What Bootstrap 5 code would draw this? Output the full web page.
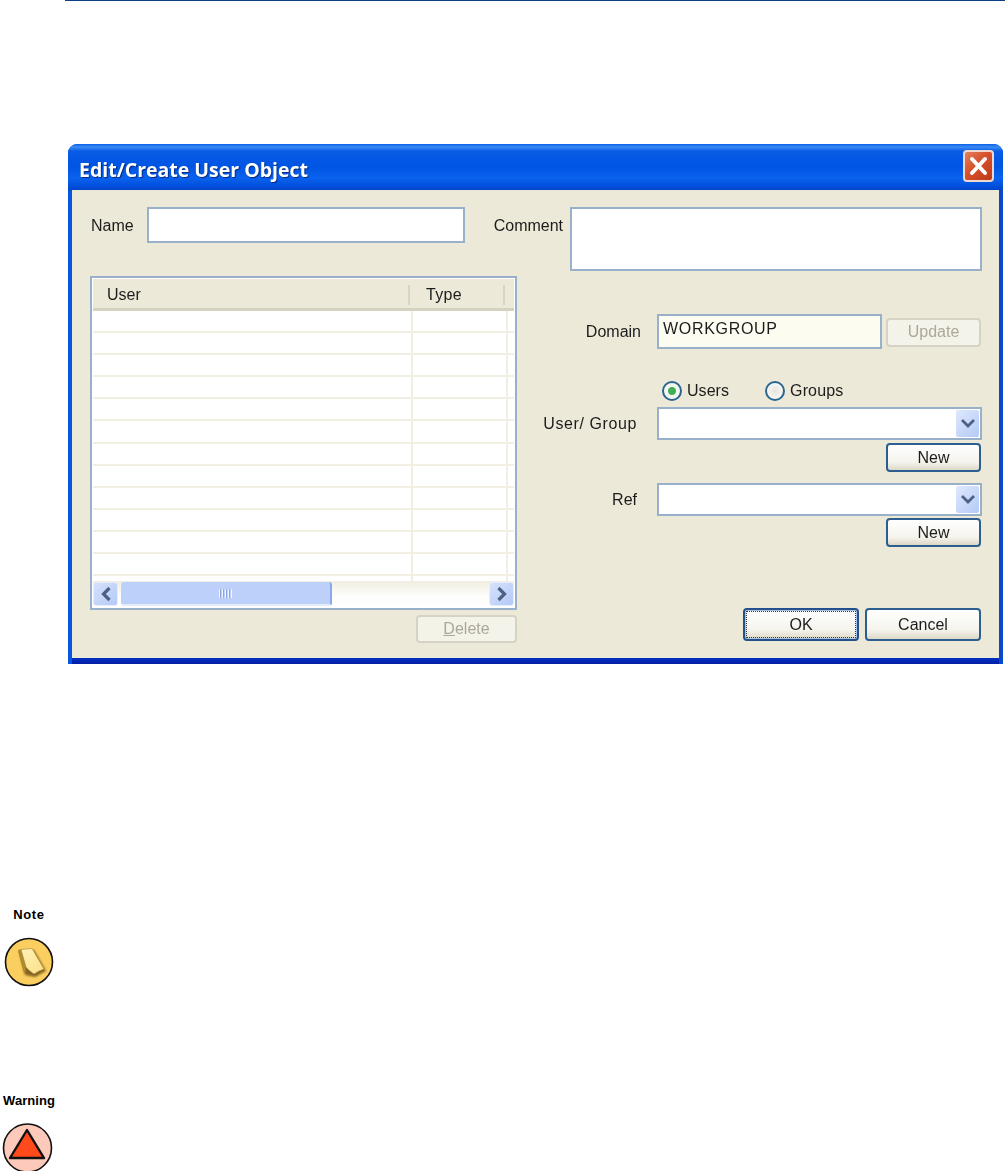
<!DOCTYPE html>
<html lang="en">
<head>
<meta charset="utf-8">
<title>Edit/Create User Object</title>
<link href="https://cdn.jsdelivr.net/npm/bootstrap@5.3.0/dist/css/bootstrap.min.css" rel="stylesheet">
<style>
html,body{background:#fff;margin:0;height:1171px;overflow:hidden}
body{font-family:"Liberation Sans",Arial,sans-serif;font-size:16px;color:#1c1c1c;line-height:1.2}
.toprule{height:1px;margin-left:65px;background:#0b3f80}
.dlg{margin:143px 0 0 68px;width:935px;height:520px;border-radius:9px 9px 0 0;overflow:hidden;background:#0a55e0;filter:blur(.45px)}
.dlg-title{height:46px;padding:0 9px 0 11px;background:linear-gradient(#0a5fe8 0,#3b8cf2 3px,#0a5ce6 7px,#0054e3 22px,#0a62ee 34px,#0050dc 42px,#0043c8 46px)}
.dlg-title h1{font-family:"Open Sans",sans-serif;font-weight:700;font-size:19.5px;margin:5px 0 0;color:#fff;letter-spacing:0;text-shadow:1px 1px 1px #0a2a80}
.xbtn{width:31px;height:32px;border:2px solid #eed9d0;border-radius:4px;background:linear-gradient(135deg,#e4805e,#d6502a 45%,#bd3a18);margin-top:-2px;padding:0}
.xbtn svg{display:block;margin:auto}
.dlg-outer{height:474px;padding:0 4px 6px;background:linear-gradient(90deg,#0a55e0 0,#0a55e0 4px,transparent 4px),linear-gradient(270deg,#0a48d0 0,#0a48d0 4px,transparent 4px),linear-gradient(0deg,#001ea8 0,#0033c0 6px,#0a55e0 6px)}
.dlg-body{height:468px;background:#ece9d8;padding:17px 17px 0 18px}
.toprow{height:64px;margin-bottom:5px}
.fld{border:2px solid #98b0ca;border-radius:0;background:#fff;box-shadow:none;padding:0 4px;font-size:16px;color:#1c1c1c;min-height:0;flex:none}
.fld:focus{border-color:#98b0ca;box-shadow:none}
.fld-name{width:318px;height:36px;margin-left:13px;margin-right:29px}
.fld-comment{width:412px;height:64px;margin-left:6px;resize:none}
.lbl-name{padding:9px 0 0 1px}
.lbl-comment{padding-top:9px;width:70px;white-space:nowrap}
.leftcol{width:427px;flex:none}
.listbox{height:334px;border:2px solid #98b0ca;background:#fff;padding:1px}
.grid-head{height:32px;background:#ece9d8;border-bottom:3px solid #d6d2c2;display:flex;padding-top:6px}
.gh-user{width:317px;padding-left:14px;border-right:2px solid #d8d4c6;height:20px}
.gh-type{width:95px;padding-left:16px;border-right:2px solid #d8d4c6;height:20px;letter-spacing:.3px}
.grid-rows{height:270px;overflow:hidden;display:grid;grid-template-columns:320px 95px 6px;grid-auto-rows:22.1px}
.grid-rows span{border-bottom:2px solid #f1efe2;border-right:2px solid #f1efe2}
.grid-rows span:nth-child(3n){border-right:0}
.hscroll{height:26px;background:linear-gradient(#f0eee2,#fdfdfb 60%,#fff);display:flex;padding:1px 0 1px}
.sb-arrow{width:25px;height:24px;background:linear-gradient(135deg,#d6e2fc,#b4c9f7);border:1px solid #e6edfc;border-radius:3px;display:flex;align-items:center;justify-content:center}
.sb-thumb{width:211px;margin-left:3px;border-radius:3px;background:#bcd0fa;border-right:2px solid #8aa8ea;border-bottom:2px solid #e4ebfb;display:flex;align-items:center;justify-content:center}
.sb-grip{width:13px;height:9px;background:repeating-linear-gradient(90deg,#f2f6ff 0,#f2f6ff 1px,#8aa5df 1px,#8aa5df 2px,transparent 2px,transparent 3px)}
.sb-space{flex:1}
.xpbtn{border:2px solid #2c5f90;border-radius:4px;background:linear-gradient(#fff,#f4f3ec 70%,#dcd8c8);color:#1c1c1c;font-size:16px;padding:0;line-height:1;box-shadow:none}
.xpbtn:hover{background:linear-gradient(#fff,#f4f3ec 70%,#dcd8c8);color:#1c1c1c;border-color:#2c5f90}
.xpbtn:disabled,.xpbtn.disabled{opacity:1;background:#f4f3ea;border-color:#d6d3c4;color:#aca899}
.btn-del{width:101px;height:28px;margin-top:5px}
.rightcol{width:465px;flex:none;padding-top:38px}
.rlbl{width:124px;text-align:right;flex:none}
.rlbl-in{width:120px;text-align:right;flex:none;white-space:nowrap}
.lbl-ug{letter-spacing:.6px}
.r-domain{height:35px}
.fld-domain{width:225px;height:35px;background:#fcfdf0;margin-left:16px;letter-spacing:.7px;padding:0 4px 5px;font-size:16px}
.btn-upd{width:95px;height:29px;margin:1px 0 0 4px}
.r-radios{height:26px;margin-top:29px;margin-bottom:3px;padding-left:145px}
.rd{width:20px;height:20px;margin:0;background-image:radial-gradient(circle,#e6e4dc,#fff);border:2px solid #2a6690;flex:none;box-shadow:none}
.rd:checked{background-color:#fff;border-color:#2a6690;background-image:radial-gradient(circle,#3fae55 0,#3fae55 3.5px,#f6f6f0 4.5px)}
.rd:focus{box-shadow:none;border-color:#2a6690}
.rd-l1{margin:0 36px 0 5px;letter-spacing:.05px}
.rd-l2{margin-left:5px;letter-spacing:.15px}
.r-combo{height:33px}
.combo{width:325px;height:33px;margin-left:20px;border:2px solid #98b0ca;background:#fff;display:flex;justify-content:flex-end;padding:1px 1px 1px 0}
.combo-btn{width:23px;height:27px;background:linear-gradient(135deg,#dfe9fe,#b4c9f6);border-radius:2px;display:flex;align-items:center;justify-content:center}
.btn-new{width:95px;height:29px;display:block;margin:3px 1px 0 auto}
.r-ref{margin-top:11px}
.btn-new2{margin-top:2px}
.r-btns{margin:61px 1px 0 0;gap:6px}
.btn-ok{width:116px;height:33px;padding-top:1px;outline:1px dotted #333;outline-offset:-4px;border-color:#234f8a;box-shadow:inset 0 0 0 1px #a9c4ea}
.btn-ok:hover{border-color:#234f8a}
.btn-cancel{width:116px;height:33px;padding-top:1px}
.sidenote{width:58px;margin:0;text-align:center;font-size:13px;font-weight:700;color:#000;line-height:15px}
.note1{margin-top:243px;letter-spacing:.6px}
.note2{margin-top:106px;letter-spacing:.05px}
.sidenote svg{display:block;margin-top:15px}
</style>
</head>
<body>
<div class="toprule"></div>
<div class="dlg">
  <div class="dlg-title d-flex align-items-center justify-content-between">
    <h1>Edit/Create User Object</h1>
    <button class="xbtn" type="button" aria-label="Close"><svg width="27" height="28" viewBox="0 0 27 28"><path d="M7 7l13 14M20 7L7 21" stroke="#fff" stroke-width="4" stroke-linecap="round"/></svg></button>
  </div>
  <div class="dlg-outer">
    <div class="dlg-body">
      <div class="toprow d-flex">
        <label class="lbl-name">Name</label>
        <input class="form-control fld fld-name" type="text">
        <label class="lbl-comment">Comment</label>
        <textarea class="form-control fld fld-comment"></textarea>
      </div>
      <div class="d-flex">
        <div class="leftcol">
          <div class="listbox">
            <div class="grid-head"><div class="gh-user">User</div><div class="gh-type">Type</div></div>
            <div class="grid-rows">
              <span></span><span></span><span></span><span></span><span></span><span></span>
              <span></span><span></span><span></span><span></span><span></span><span></span>
              <span></span><span></span><span></span><span></span><span></span><span></span>
              <span></span><span></span><span></span><span></span><span></span><span></span>
              <span></span><span></span><span></span><span></span><span></span><span></span>
              <span></span><span></span><span></span><span></span><span></span><span></span>
              <span></span><span></span><span></span>
            </div>
            <div class="hscroll">
              <div class="sb-arrow"><svg width="12" height="16" viewBox="0 0 12 16"><path d="M9.5 2L3.5 8l6 6" fill="none" stroke="#4d6185" stroke-width="3.2"/></svg></div>
              <div class="sb-thumb"><div class="sb-grip"></div></div>
              <div class="sb-space"></div>
              <div class="sb-arrow"><svg width="12" height="16" viewBox="0 0 12 16"><path d="M2.5 2l6 6-6 6" fill="none" stroke="#4d6185" stroke-width="3.2"/></svg></div>
            </div>
          </div>
          <div class="d-flex justify-content-end"><button class="btn xpbtn btn-del" type="button" disabled><u>D</u>elete</button></div>
        </div>
        <div class="rightcol">
          <div class="r-domain d-flex align-items-center">
            <label class="rlbl">Domain</label>
            <input class="form-control fld fld-domain" type="text" value="WORKGROUP">
            <button class="btn xpbtn btn-upd" type="button" disabled>Update</button>
          </div>
          <div class="r-radios d-flex align-items-center">
            <input class="form-check-input rd" type="radio" name="ug" id="ru" checked><label class="rd-l1" for="ru">Users</label>
            <input class="form-check-input rd" type="radio" name="ug" id="rg"><label class="rd-l2" for="rg">Groups</label>
          </div>
          <div class="r-combo d-flex align-items-center">
            <label class="rlbl-in lbl-ug">User/ Group</label>
            <div class="combo"><div class="combo-btn"><svg width="16" height="11" viewBox="0 0 16 11"><path d="M2 2l6 6 6-6" fill="none" stroke="#4d6185" stroke-width="2.8"/></svg></div></div>
          </div>
          <button class="btn xpbtn btn-new" type="button">New</button>
          <div class="r-combo r-ref d-flex align-items-center">
            <label class="rlbl-in">Ref</label>
            <div class="combo"><div class="combo-btn"><svg width="16" height="11" viewBox="0 0 16 11"><path d="M2 2l6 6 6-6" fill="none" stroke="#4d6185" stroke-width="2.8"/></svg></div></div>
          </div>
          <button class="btn xpbtn btn-new btn-new2" type="button">New</button>
          <div class="r-btns d-flex justify-content-end">
            <button class="btn xpbtn btn-ok" type="button">OK</button>
            <button class="btn xpbtn btn-cancel" type="button">Cancel</button>
          </div>
        </div>
      </div>
    </div>
  </div>
</div>
<div class="sidenote note1">Note
  <svg width="58" height="50" viewBox="0 0 58 50">
    <defs>
      <linearGradient id="pad" x1="0" y1="0" x2="1" y2="1"><stop offset="0" stop-color="#fff2b8"/><stop offset="1" stop-color="#fddf86"/></linearGradient>
      <filter id="sh" x="-30%" y="-30%" width="160%" height="160%"><feGaussianBlur stdDeviation="1.3"/></filter>
    </defs>
    <circle cx="29" cy="25" r="23.5" fill="#fbcf5f" stroke="#111" stroke-width="1.6"/>
    <path d="M19 14L25 38 35 40 46 34 34 13z" fill="#5c3f0c" opacity=".75" filter="url(#sh)"/>
    <path d="M18 13.5l3-1.5 5 19-1 5-1.5-1z" fill="#b08a2c"/>
    <path d="M21 12.5L32 11.5 44 32Q38 34 34 37 28 33 26 30z" fill="url(#pad)" stroke="#a98a36" stroke-width=".6"/>
  </svg>
</div>
<div class="sidenote note2">Warning
  <svg width="58" height="50" viewBox="0 0 58 50">
    <circle cx="27.5" cy="25" r="24" fill="#fcc9ba" stroke="#111" stroke-width="1.6"/>
    <path d="M27 7L44 35H10z" fill="#ff4a1c" stroke="#111" stroke-width="2.4" stroke-linejoin="round"/>
  </svg>
</div>
<script src="https://cdn.jsdelivr.net/npm/bootstrap@5.3.0/dist/js/bootstrap.bundle.min.js"></script>
</body>
</html>
